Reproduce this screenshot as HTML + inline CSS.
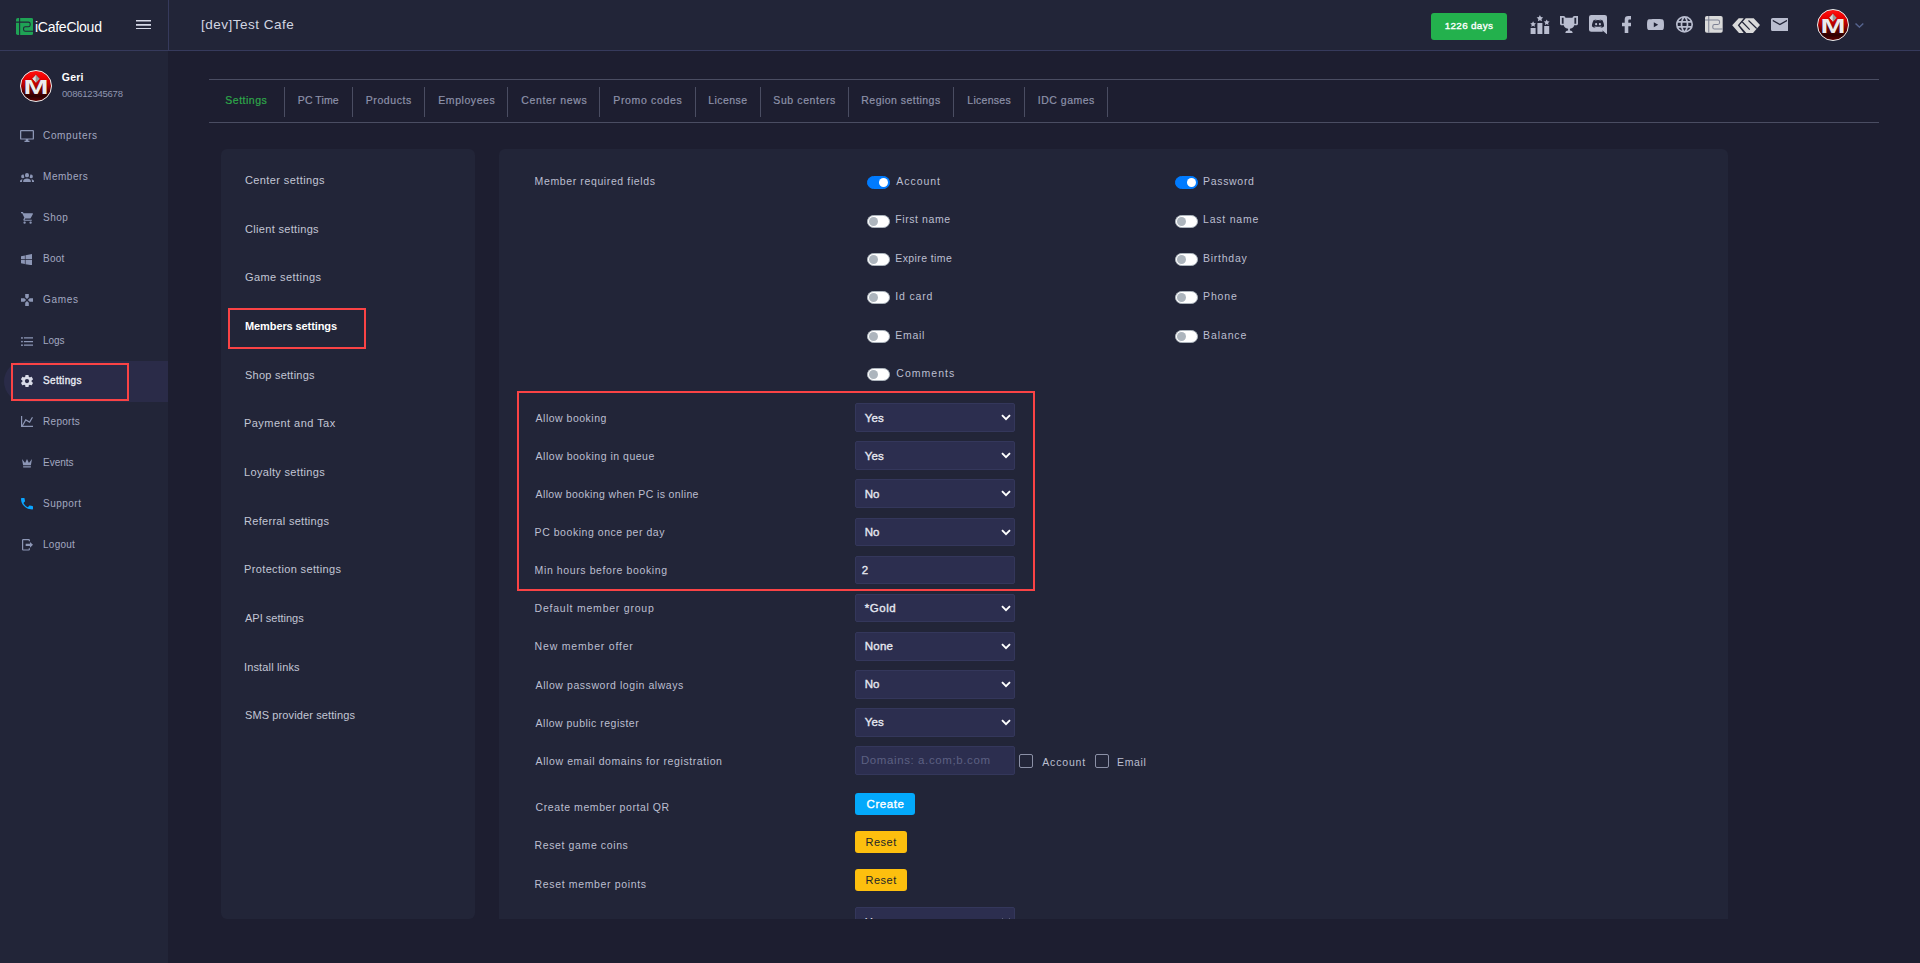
<!DOCTYPE html>
<html lang="en"><head><meta charset="utf-8"><title>iCafeCloud - Members settings</title>
<style>
html,body{margin:0;padding:0}
body{width:1920px;height:963px;overflow:hidden;position:relative;background:#1d1e30;font-family:'Liberation Sans', sans-serif;}
.a{position:absolute;display:block}
.t{position:absolute;display:block;line-height:20px;height:20px;white-space:nowrap}
.panel{position:absolute;background:#222538;border-radius:6px}
.sel{position:absolute;left:855px;width:160px;height:28.6px;background:#2c2e4f;border:1px solid #34375b;border-radius:2px;box-sizing:border-box}
.tg{position:absolute;width:23px;height:13px;border-radius:7px;background:#fff;box-sizing:border-box;border:1px solid #adb5bd}
.tg i{position:absolute;left:1px;top:1px;width:9px;height:9px;border-radius:50%;background:#adb5bd}
.tg.on{background:#007bff;border-color:#007bff}
.tg.on i{left:11px;background:#fff}
.sep{position:absolute;top:87px;width:1px;height:30px;background:#4a4d62}
.cb{position:absolute;width:14px;height:14px;box-sizing:border-box;border:1px solid #8b90a6;border-radius:2px}
.btn{position:absolute;border-radius:3px}
.red{position:absolute;border:2px solid #fa4345;box-sizing:border-box}
</style></head><body>

<nav>
<div class="a" style="left:0;top:0;width:168px;height:963px;background:#222538"></div>
<div class="a" style="left:19.8px;top:69.7px;width:32.4px;height:32.4px;border-radius:50%;box-sizing:border-box;border:1.3px solid #f0f0f0;background:radial-gradient(circle at 50% 45%,rgba(0,0,0,0) 55%,rgba(40,0,0,.55) 100%),linear-gradient(180deg,#ff1212 0%,#f00000 22%,#b80000 48%,#5e0000 70%,#2c0000 84%,#6a0000 100%);overflow:hidden"><span class="t" style="left:0;width:29.799999999999997px;text-align:center;top:5.899999999999999px;font-size:20px;font-weight:700;color:#ececec;transform:scaleX(1.5);text-shadow:0 1px 1px #3a0000">M</span><svg class="a" style="left:0;top:0" width="29.799999999999997" height="29.799999999999997" viewBox="0 0 32 32"><path d="M15.800 3.800l4.200 4.500-4.200 4.700-4.200-4.700z" fill="#dcdcdc" stroke="#c00000" stroke-width="1"/><path d="M15.800 3.800l4.200 4.500-4.200 4.700z" fill="#9a9a9a"/></svg></div>
<div class="a" style="left:4px;top:361px;width:164px;height:41px;background:#2a2b48;border-radius:20.5px 0 0 20.5px"></div>
<div class="red" style="left:11px;top:363px;width:118.400px;height:38px"></div>
<svg class="a" style="left:20px;top:130px;" width="14" height="12" viewBox="1.00 2.00 22.00 20.00" preserveAspectRatio="none"><path fill="#8c96b5" d="M21,16H3V4H21M21,2H3C1.89,2 1,2.89 1,4V16A2,2 0 0,0 3,18H10V20H8V22H16V20H14V18H21A2,2 0 0,0 23,16V4C23,2.89 22.1,2 21,2Z"/></svg>
<svg class="a" style="left:20px;top:173px;" width="14" height="9" viewBox="0.00 5.50 24.00 14.50" preserveAspectRatio="none"><path fill="#8c96b5" d="M12,5.5A3.5,3.5 0 0,1 15.5,9A3.5,3.5 0 0,1 12,12.5A3.5,3.5 0 0,1 8.5,9A3.5,3.5 0 0,1 12,5.5M5,8C5.56,8 6.08,8.15 6.53,8.42C6.38,9.85 6.8,11.27 7.66,12.38C7.16,13.34 6.16,14 5,14A3,3 0 0,1 2,11A3,3 0 0,1 5,8M19,8A3,3 0 0,1 22,11A3,3 0 0,1 19,14C17.84,14 16.84,13.34 16.34,12.38C17.2,11.27 17.62,9.85 17.47,8.42C17.92,8.15 18.44,8 19,8M5.5,18.25C5.5,16.18 8.41,14.5 12,14.5C15.59,14.5 18.5,16.18 18.5,18.25V20H5.5V18.25M0,20V18.5C0,17.11 1.89,15.94 4.45,15.6C3.86,16.28 3.5,17.22 3.5,18.25V20H0M24,20H20.5V18.25C20.5,17.22 20.14,16.28 19.55,15.6C22.11,15.94 24,17.11 24,18.5V20Z"/></svg>
<svg class="a" style="left:20.5px;top:212px;" width="12.0" height="11.800000000000011" viewBox="1.00 2.00 20.00 20.00" preserveAspectRatio="none"><path fill="#8c96b5" d="M17,18C15.89,18 15,18.89 15,20A2,2 0 0,0 17,22A2,2 0 0,0 19,20C19,18.89 18.1,18 17,18M1,2V4H3L6.6,11.59L5.24,14.04C5.09,14.32 5,14.65 5,15A2,2 0 0,0 7,17H19V15H7.42A0.25,0.25 0 0,1 7.17,14.75C7.17,14.7 7.18,14.66 7.2,14.63L8.1,13H15.55C16.3,13 16.96,12.58 17.3,11.97L20.88,5.5C20.95,5.34 21,5.17 21,5A1,1 0 0,0 20,4H5.21L4.27,2M7,18C5.89,18 5,18.89 5,20A2,2 0 0,0 7,22A2,2 0 0,0 9,20C9,18.89 8.1,18 7,18Z"/></svg>
<svg class="a" style="left:21.2px;top:253.5px;" width="11.000000000000004" height="11.300000000000011" viewBox="3.00 3.00 17.00 19.00" preserveAspectRatio="none"><path fill="#8c96b5" d="M3,12V6.75L9,5.43V11.91L3,12M20,3V11.75L10,11.9V5.21L20,3M3,13L9,13.09V19.9L3,18.75V13M20,13.25V22L10,20.09V13.1L20,13.25Z"/></svg>
<svg class="a" style="left:21px;top:294px;" width="12" height="12" viewBox="2.00 2.00 20.00 20.00" preserveAspectRatio="none"><path fill="#8c96b5" d="M16.5,9L13.5,12L16.5,15H22V9M9,16.5V22H15V16.5L12,13.5M7.5,9H2V15H7.5L10.5,12M15,7.5V2H9V7.5L12,10.5L15,7.5Z"/></svg>
<svg class="a" style="left:21px;top:336.5px;" width="12" height="9.100000000000023" viewBox="2.50 4.50 18.50 15.00" preserveAspectRatio="none"><path fill="#8c96b5" d="M7,5H21V7H7V5M7,13V11H21V13H7M4,4.5A1.5,1.5 0 0,1 5.5,6A1.5,1.5 0 0,1 4,7.5A1.5,1.5 0 0,1 2.5,6A1.5,1.5 0 0,1 4,4.5M4,10.5A1.5,1.5 0 0,1 5.5,12A1.5,1.5 0 0,1 4,13.5A1.5,1.5 0 0,1 2.5,12A1.5,1.5 0 0,1 4,10.5M7,19V17H21V19H7M4,16.5A1.5,1.5 0 0,1 5.5,18A1.5,1.5 0 0,1 4,19.5A1.5,1.5 0 0,1 2.5,18A1.5,1.5 0 0,1 4,16.5Z"/></svg>
<svg class="a" style="left:21px;top:374.8px;" width="12" height="12.199999999999989" viewBox="2.27 2.00 19.45 20.00" preserveAspectRatio="none"><path fill="#d9dbe8" d="M12,15.5A3.5,3.5 0 0,1 8.5,12A3.5,3.5 0 0,1 12,8.5A3.5,3.5 0 0,1 15.5,12A3.5,3.5 0 0,1 12,15.5M19.43,12.97C19.47,12.65 19.5,12.33 19.5,12C19.5,11.67 19.47,11.34 19.43,11L21.54,9.37C21.73,9.22 21.78,8.95 21.66,8.73L19.66,5.27C19.54,5.05 19.27,4.96 19.05,5.05L16.56,6.05C16.04,5.66 15.5,5.32 14.87,5.07L14.5,2.42C14.46,2.18 14.25,2 14,2H10C9.75,2 9.54,2.18 9.5,2.42L9.13,5.07C8.5,5.32 7.96,5.66 7.44,6.05L4.95,5.05C4.73,4.96 4.46,5.05 4.34,5.27L2.34,8.73C2.21,8.95 2.27,9.22 2.46,9.37L4.57,11C4.53,11.34 4.5,11.67 4.5,12C4.5,12.33 4.53,12.65 4.57,12.97L2.46,14.63C2.27,14.78 2.21,15.05 2.34,15.27L4.34,18.73C4.46,18.95 4.73,19.03 4.95,18.95L7.44,17.94C7.96,18.34 8.5,18.68 9.13,18.93L9.5,21.58C9.54,21.82 9.75,22 10,22H14C14.25,22 14.46,21.82 14.5,21.58L14.87,18.93C15.5,18.67 16.04,18.34 16.56,17.94L19.05,18.95C19.27,19.03 19.54,18.95 19.66,18.73L21.66,15.27C21.78,15.05 21.73,14.78 21.54,14.63L19.43,12.97Z"/></svg>
<svg class="a" style="left:21px;top:416px;" width="12" height="11" viewBox="2.00 3.00 20.00 18.00" preserveAspectRatio="none"><path fill="#8c96b5" d="M16,11.78L20.24,4.45L21.97,5.45L16.74,14.5L10.23,10.75L5.46,19H22V21H2V3H4V17.54L9.5,8L16,11.78Z"/></svg>
<svg class="a" style="left:22px;top:459px;" width="10" height="8.5" viewBox="3.00 5.00 18.00 15.00" preserveAspectRatio="none"><path fill="#8c96b5" d="M5,16L3,5L8.5,12L12,5L15.5,12L21,5L19,16H5M19,19A1,1 0 0,1 18,20H6A1,1 0 0,1 5,19V18H19V19Z"/></svg>
<svg class="a" style="left:21px;top:498px;" width="12" height="11.5" viewBox="3.00 3.00 18.00 18.00" preserveAspectRatio="none"><path fill="#0aa5ff" d="M6.62,10.79C8.06,13.62 10.38,15.94 13.21,17.38L15.41,15.18C15.69,14.9 16.08,14.82 16.43,14.93C17.55,15.3 18.75,15.5 20,15.5A1,1 0 0,1 21,16.5V20A1,1 0 0,1 20,21A17,17 0 0,1 3,4A1,1 0 0,1 4,3H7.5A1,1 0 0,1 8.5,4C8.5,5.25 8.7,6.45 9.07,7.57C9.18,7.92 9.1,8.31 8.82,8.59L6.62,10.79Z"/></svg>
<svg class="a" style="left:21.5px;top:539.4px;" width="11.0" height="11.600000000000023" viewBox="3.00 2.00 18.00 20.00" preserveAspectRatio="none"><path fill="#8c96b5" d="M16,17V14H9V10H16V7L21,12L16,17M14,2A2,2 0 0,1 16,4V6H14V4H5V20H14V18H16V20A2,2 0 0,1 14,22H5A2,2 0 0,1 3,20V4A2,2 0 0,1 5,2H14Z"/></svg>
<span class="t" style="left:61.80px;top:67px;font-size:10.5px;color:#ffffff;font-weight:700;letter-spacing:0.167px;">Geri</span>
<span class="t" style="left:62.05px;top:84px;font-size:9.5px;color:#8f95b0;letter-spacing:-0.227px;">008612345678</span>
<span class="t" style="left:43.05px;top:126px;font-size:10px;color:#a3a8c0;letter-spacing:0.644px;">Computers</span>
<span class="t" style="left:43.05px;top:167px;font-size:10px;color:#a3a8c0;letter-spacing:0.525px;">Members</span>
<span class="t" style="left:43.05px;top:208px;font-size:10px;color:#a3a8c0;letter-spacing:0.500px;">Shop</span>
<span class="t" style="left:43.05px;top:249px;font-size:10px;color:#a3a8c0;letter-spacing:0.217px;">Boot</span>
<span class="t" style="left:43.05px;top:290px;font-size:10px;color:#a3a8c0;letter-spacing:0.688px;">Games</span>
<span class="t" style="left:43.05px;top:331px;font-size:10px;color:#a3a8c0;letter-spacing:-0.117px;">Logs</span>
<span class="t" style="left:43.05px;top:371px;font-size:10px;color:#e8eaf2;letter-spacing:0.321px;-webkit-text-stroke:0.35px;">Settings</span>
<span class="t" style="left:43.05px;top:412px;font-size:10px;color:#a3a8c0;letter-spacing:0.275px;">Reports</span>
<span class="t" style="left:43.05px;top:453px;font-size:10px;color:#a3a8c0;">Events</span>
<span class="t" style="left:43.05px;top:494px;font-size:10px;color:#a3a8c0;letter-spacing:0.475px;">Support</span>
<span class="t" style="left:43.05px;top:535px;font-size:10px;color:#a3a8c0;letter-spacing:0.250px;">Logout</span>
</nav>
<header>
<div class="a" style="left:0;top:0;width:1920px;height:50px;background:#222538;border-bottom:1px solid #363a5c"></div>
<div class="a" style="left:168px;top:0;width:1px;height:50px;background:#363a5c"></div>
<svg class="a" style="left:16px;top:18px" width="17.2" height="17" viewBox="0 0 17 17" preserveAspectRatio="none"><rect width="17" height="17" rx="1.800" fill="#1fa355"/><path d="M3.600 0V17M0 4.100H12.300Q14 4.100 14 5.800V7Q14 8.700 12.300 8.700H9.200Q7.500 8.700 7.500 10.400V11.600Q7.500 13.300 9.200 13.300H17" fill="none" stroke="#222538" stroke-width="1.05"/></svg>
<span class="t" style="left:35px;top:17px;font-size:15.5px;color:#fff;letter-spacing:-0.3px;transform-origin:0 0;transform:scaleX(0.905)">iCafeCloud</span>
<svg class="a" style="left:136px;top:19.5px;" width="15.199999999999989" height="9.7" viewBox="3.00 6.00 18.00 12.00" preserveAspectRatio="none"><path fill="#d5d8e6" d="M3,6H21V8H3V6M3,11H21V13H3V11M3,16H21V18H3V16Z"/></svg>
<div class="a" style="left:1816.8px;top:8.8px;width:32.4px;height:32.4px;border-radius:50%;box-sizing:border-box;border:1.3px solid #f0f0f0;background:radial-gradient(circle at 50% 45%,rgba(0,0,0,0) 55%,rgba(40,0,0,.55) 100%),linear-gradient(180deg,#ff1212 0%,#f00000 22%,#b80000 48%,#5e0000 70%,#2c0000 84%,#6a0000 100%);overflow:hidden"><span class="t" style="left:0;width:29.799999999999997px;text-align:center;top:5.899999999999999px;font-size:20px;font-weight:700;color:#ececec;transform:scaleX(1.5);text-shadow:0 1px 1px #3a0000">M</span><svg class="a" style="left:0;top:0" width="29.799999999999997" height="29.799999999999997" viewBox="0 0 32 32"><path d="M15.800 3.800l4.200 4.500-4.200 4.700-4.200-4.700z" fill="#dcdcdc" stroke="#c00000" stroke-width="1"/><path d="M15.800 3.800l4.200 4.500-4.200 4.700z" fill="#9a9a9a"/></svg></div>
<svg class="a" style="left:1855px;top:22.8px;" width="8.799999999999955" height="5.099999999999998" viewBox="6.00 8.58 12.00 7.42" preserveAspectRatio="none"><path fill="#56648f" d="M7.41,8.58L12,13.17L16.59,8.58L18,10L12,16L6,10L7.41,8.58Z"/></svg>
<div class="btn" style="left:1431px;top:13px;width:76px;height:27px;background:#23b14d"></div>
<svg class="a" style="left:1530px;top:15px" width="20" height="19" viewBox="0 0 20 19" fill="#b9bdcf"><rect x="0.6" y="13" width="5" height="6"/><rect x="7.4" y="8" width="5" height="11"/><rect x="14.2" y="11" width="5" height="8"/><path d="M3.1 6.2l.9 1.9 2 .3-1.5 1.4.4 2-1.8-1-1.8 1 .4-2L.2 8.4l2-.3zM9.9 0l1 2.1 2.3.3-1.7 1.6.4 2.300-2-1.100-2 1.100.4-2.300L6.600 2.400l2.300-.3zM16.700 4.400l.9 1.900 2 .3-1.500 1.400.4 2-1.800-1-1.800 1 .4-2-1.500-1.400 2-.3z"/></svg>
<svg class="a" style="left:1559.8px;top:16px;" width="18.0" height="17" viewBox="2.00 2.00 20.00 20.00" preserveAspectRatio="none"><path fill="#b9bdcf" d="M20.2,2H19.5H18C17.1,2 16,3 16,4H8C8,3 6.9,2 6,2H4.5H3.8H2V11C2,12 3,13 4,13H6.2C6.6,15 7.9,16.7 11,17V19.1C8.8,19.3 8,20.4 8,21.7V22H16V21.7C16,20.4 15.2,19.3 13,19.1V17C16.1,16.7 17.4,15 17.8,13H20C21,13 22,12 22,11V2H20.2M4,11V4H6V6V11C5.1,11 4.3,11 4,11M20,11C19.7,11 18.9,11 18,11V6V4H20V11Z"/></svg>
<svg class="a" style="left:1589px;top:15px;" width="18" height="19.4" viewBox="2.00 1.00 20.00 23.00" preserveAspectRatio="none"><path fill="#b9bdcf" d="M22,24L16.75,19L17.38,21H4.5A2.5,2.5 0 0,1 2,18.5V3.5A2.5,2.5 0 0,1 4.5,1H19.5A2.5,2.5 0 0,1 22,3.5V24M12,6.8C9.32,6.8 7.44,7.95 7.44,7.95C8.47,7.03 10.27,6.5 10.27,6.5L10.1,6.33C8.41,6.36 6.88,7.53 6.88,7.53C5.16,11.12 5.27,14.22 5.27,14.22C6.67,16.03 8.75,15.9 8.75,15.9L9.46,15C8.21,14.73 7.42,13.62 7.42,13.62C7.42,13.62 9.3,14.9 12,14.9C14.7,14.9 16.58,13.62 16.58,13.62C16.58,13.62 15.79,14.73 14.54,15L15.25,15.9C15.25,15.9 17.33,16.03 18.73,14.22C18.73,14.22 18.84,11.12 17.12,7.53C17.12,7.53 15.59,6.36 13.9,6.33L13.73,6.5C13.73,6.5 15.53,7.03 16.56,7.95C16.56,7.95 14.68,6.8 12,6.8M9.93,10.59C10.58,10.59 11.11,11.16 11.1,11.86C11.1,12.55 10.58,13.13 9.93,13.13C9.29,13.13 8.77,12.55 8.77,11.86C8.77,11.16 9.28,10.59 9.93,10.59M14.1,10.59C14.75,10.59 15.27,11.16 15.27,11.86C15.27,12.55 14.75,13.13 14.1,13.13C13.46,13.13 12.94,12.55 12.94,11.86C12.94,11.16 13.45,10.59 14.1,10.59Z"/></svg>
<svg class="a" style="left:1622px;top:16px;" width="9" height="17" viewBox="7.00 2.00 10.00 20.00" preserveAspectRatio="none"><path fill="#b9bdcf" d="M17,2V2H17V6H15C14.31,6 14,6.81 14,7.5V10H14L17,10V14H14V22H10V14H7V10H10V6A4,4 0 0,1 14,2H17Z"/></svg>
<svg class="a" style="left:1647px;top:18.8px;" width="17" height="11.5" viewBox="2.00 5.00 20.00 14.00" preserveAspectRatio="none"><path fill="#b9bdcf" d="M10,15L15.19,12L10,9V15M21.56,7.17C21.69,7.64 21.78,8.27 21.84,9.07C21.91,9.87 21.94,10.56 21.94,11.16L22,12C22,14.19 21.84,15.8 21.56,16.83C21.31,17.73 20.73,18.31 19.83,18.56C19.36,18.69 18.5,18.78 17.18,18.84C15.88,18.91 14.69,18.94 13.59,18.94L12,19C7.81,19 5.2,18.84 4.17,18.56C3.27,18.31 2.69,17.73 2.44,16.83C2.31,16.36 2.22,15.73 2.16,14.93C2.09,14.13 2.06,13.44 2.06,12.84L2,12C2,9.81 2.16,8.2 2.44,7.17C2.69,6.27 3.27,5.69 4.17,5.44C4.64,5.31 5.5,5.22 6.82,5.16C8.12,5.09 9.31,5.06 10.41,5.06L12,5C16.19,5 18.8,5.16 19.83,5.44C20.73,5.69 21.31,6.27 21.56,7.17Z"/></svg>
<svg class="a" style="left:1676px;top:16px;" width="17" height="16.799999999999997" viewBox="2.00 2.00 20.00 20.00" preserveAspectRatio="none"><path fill="#b9bdcf" d="M16.36,14C16.44,13.34 16.5,12.68 16.5,12C16.5,11.32 16.44,10.66 16.36,10H19.74C19.9,10.64 20,11.31 20,12C20,12.69 19.9,13.36 19.74,14M14.59,19.56C15.19,18.45 15.65,17.25 15.97,16H18.92C17.96,17.65 16.43,18.93 14.59,19.56M14.34,14H9.66C9.56,13.34 9.5,12.68 9.5,12C9.5,11.32 9.56,10.65 9.66,10H14.34C14.43,10.65 14.5,11.32 14.5,12C14.5,12.68 14.43,13.34 14.34,14M12,19.96C11.17,18.76 10.5,17.43 10.09,16H13.91C13.5,17.43 12.83,18.76 12,19.96M8,8H5.08C6.03,6.34 7.57,5.06 9.4,4.44C8.8,5.55 8.35,6.75 8,8M5.08,16H8C8.35,17.25 8.8,18.45 9.4,19.56C7.57,18.93 6.03,17.65 5.08,16M4.26,14C4.1,13.36 4,12.69 4,12C4,11.31 4.1,10.64 4.26,10H7.64C7.56,10.66 7.5,11.32 7.5,12C7.5,12.68 7.56,13.34 7.64,14M12,4.03C12.83,5.23 13.5,6.57 13.91,8H10.09C10.5,6.57 11.17,5.23 12,4.03M18.92,8H15.97C15.65,6.75 15.19,5.55 14.59,4.44C16.43,5.07 17.96,6.34 18.92,8M12,2C6.47,2 2,6.5 2,12A10,10 0 0,0 12,22A10,10 0 0,0 22,12A10,10 0 0,0 12,2Z"/></svg>
<svg class="a" style="left:1705.3px;top:16.3px" width="17.7" height="16.7" viewBox="0 0 17 17" preserveAspectRatio="none"><rect width="17" height="17" rx="1.800" fill="#dadada"/><path d="M3.600 0V17M0 4.100H12.300Q14 4.100 14 5.800V7Q14 8.700 12.300 8.700H9.200Q7.500 8.700 7.500 10.400V11.600Q7.500 13.300 9.200 13.300H17" fill="none" stroke="#7d8193" stroke-width="1.0"/></svg>
<svg class="a" style="left:1732px;top:17px" width="28" height="17" viewBox="0 0 28 17"><path fill="#dadada" d="M0.200 8.200L6.700 1.200H11.700L5.800 8.200L11.700 16H7zM13.700 1.200H21.700L28 8L21 16H14.300L7.500 8.200z"/><path d="M10.300 5L17.700 12.700M16.500 3.500L24.700 11.500" stroke="#222538" stroke-width="1.150" fill="none"/></svg>
<svg class="a" style="left:1770.6px;top:17.9px;" width="17.800000000000182" height="13.100000000000001" viewBox="2.00 4.00 20.00 16.00" preserveAspectRatio="none"><path fill="#b9bdcf" d="M20,8L12,13L4,8V6L12,11L20,6M20,4H4C2.89,4 2,4.89 2,6V18A2,2 0 0,0 4,20H20A2,2 0 0,0 22,18V6C22,4.89 21.1,4 20,4Z"/></svg>
<span class="t" style="left:200.90px;top:15px;font-size:13.5px;color:#d2d5e2;letter-spacing:0.512px;">[dev]Test Cafe</span>
<span class="t" style="left:1444.70px;top:16px;font-size:9.9px;color:#ffffff;letter-spacing:0.325px;-webkit-text-stroke:0.35px;">1226 days</span>
</header>
<main>
<section class="tabs">
<div class="a" style="left:209px;top:79px;width:1670px;height:1px;background:#4a4d62"></div>
<div class="a" style="left:209px;top:122px;width:1670px;height:1px;background:#4a4d62"></div>
<div class="sep" style="left:284px"></div>
<div class="sep" style="left:352px"></div>
<div class="sep" style="left:424px"></div>
<div class="sep" style="left:507px"></div>
<div class="sep" style="left:599px"></div>
<div class="sep" style="left:695px"></div>
<div class="sep" style="left:760px"></div>
<div class="sep" style="left:848px"></div>
<div class="sep" style="left:953px"></div>
<div class="sep" style="left:1024px"></div>
<div class="sep" style="left:1107px"></div>
<span class="t" style="left:225.30px;top:90px;font-size:10.5px;color:#2ea84a;letter-spacing:0.500px;-webkit-text-stroke:0.2px;">Settings</span>
<span class="t" style="left:297.80px;top:90px;font-size:10.5px;color:#8d92aa;letter-spacing:0.083px;-webkit-text-stroke:0.2px;">PC Time</span>
<span class="t" style="left:365.80px;top:90px;font-size:10.5px;color:#8d92aa;letter-spacing:0.571px;-webkit-text-stroke:0.2px;">Products</span>
<span class="t" style="left:438.30px;top:90px;font-size:10.5px;color:#8d92aa;letter-spacing:0.562px;-webkit-text-stroke:0.2px;">Employees</span>
<span class="t" style="left:521.30px;top:90px;font-size:10.5px;color:#8d92aa;letter-spacing:0.650px;-webkit-text-stroke:0.2px;">Center news</span>
<span class="t" style="left:613.30px;top:90px;font-size:10.5px;color:#8d92aa;letter-spacing:0.650px;-webkit-text-stroke:0.2px;">Promo codes</span>
<span class="t" style="left:708.30px;top:90px;font-size:10.5px;color:#8d92aa;letter-spacing:0.417px;-webkit-text-stroke:0.2px;">License</span>
<span class="t" style="left:773.30px;top:90px;font-size:10.5px;color:#8d92aa;letter-spacing:0.600px;-webkit-text-stroke:0.2px;">Sub centers</span>
<span class="t" style="left:861.30px;top:90px;font-size:10.5px;color:#8d92aa;letter-spacing:0.464px;-webkit-text-stroke:0.2px;">Region settings</span>
<span class="t" style="left:967.30px;top:90px;font-size:10.5px;color:#8d92aa;letter-spacing:0.286px;-webkit-text-stroke:0.2px;">Licenses</span>
<span class="t" style="left:1037.80px;top:90px;font-size:10.5px;color:#8d92aa;letter-spacing:0.500px;-webkit-text-stroke:0.2px;">IDC games</span>
</section>
<section class="settings-menu">
<div class="panel" style="left:221px;top:149px;width:254px;height:770px"></div>
<div class="red" style="left:228px;top:308px;width:138px;height:40.500px"></div>
<span class="t" style="left:245.00px;top:170px;font-size:11px;color:#c2c5d5;letter-spacing:0.393px;">Center settings</span>
<span class="t" style="left:245.00px;top:219px;font-size:11px;color:#c2c5d5;letter-spacing:0.321px;">Client settings</span>
<span class="t" style="left:245.00px;top:267px;font-size:11px;color:#c2c5d5;letter-spacing:0.421px;">Game settings</span>
<span class="t" style="left:245.00px;top:316px;font-size:11px;color:#ffffff;font-weight:700;letter-spacing:-0.100px;">Members settings</span>
<span class="t" style="left:245.00px;top:365px;font-size:11px;color:#c2c5d5;letter-spacing:0.242px;">Shop settings</span>
<span class="t" style="left:244.00px;top:413px;font-size:11px;color:#c2c5d5;letter-spacing:0.457px;">Payment and Tax</span>
<span class="t" style="left:244.00px;top:462px;font-size:11px;color:#c2c5d5;letter-spacing:0.327px;">Loyalty settings</span>
<span class="t" style="left:244.00px;top:511px;font-size:11px;color:#c2c5d5;letter-spacing:0.300px;">Referral settings</span>
<span class="t" style="left:244.00px;top:559px;font-size:11px;color:#c2c5d5;letter-spacing:0.364px;">Protection settings</span>
<span class="t" style="left:245.00px;top:608px;font-size:11px;color:#c2c5d5;">API settings</span>
<span class="t" style="left:244.00px;top:657px;font-size:11px;color:#c2c5d5;letter-spacing:0.150px;">Install links</span>
<span class="t" style="left:245.00px;top:705px;font-size:11px;color:#c2c5d5;letter-spacing:0.115px;">SMS provider settings</span>
</section>
<section class="settings-form">
<div class="panel" style="left:499px;top:149px;width:1229px;height:770px;overflow:hidden;border-radius:6px 6px 0 0"><div class="sel" style="left:356px;top:758px"><svg class="a" style="left:145px;top:10px" width="10" height="7" viewBox="0 0 10 7"><path d="M1 1.200l4 4 4-4" fill="none" stroke="#fff" stroke-width="1.900"/></svg><span class="t" style="left:9px;top:4px;font-size:11.5px;color:#e6e8f1">Yes</span></div></div>
<div class="red" style="left:517px;top:391px;width:518px;height:200px"></div>
<div class="tg on" style="left:867px;top:176px"><i></i></div>
<div class="tg on" style="left:1175px;top:176px"><i></i></div>
<div class="tg" style="left:867px;top:214.6px"><i></i></div>
<div class="tg" style="left:1175px;top:214.6px"><i></i></div>
<div class="tg" style="left:867px;top:253px"><i></i></div>
<div class="tg" style="left:1175px;top:253px"><i></i></div>
<div class="tg" style="left:867px;top:291px"><i></i></div>
<div class="tg" style="left:1175px;top:291px"><i></i></div>
<div class="tg" style="left:867px;top:329.7px"><i></i></div>
<div class="tg" style="left:1175px;top:329.7px"><i></i></div>
<div class="tg" style="left:867px;top:368px"><i></i></div>
<div class="sel" style="top:403.10px"><svg class="a" style="left:145px;top:10px" width="10" height="7" viewBox="0 0 10 7"><path d="M1 1.200l4 4 4-4" fill="none" stroke="#fff" stroke-width="1.900"/></svg></div>
<div class="sel" style="top:441.25px"><svg class="a" style="left:145px;top:10px" width="10" height="7" viewBox="0 0 10 7"><path d="M1 1.200l4 4 4-4" fill="none" stroke="#fff" stroke-width="1.900"/></svg></div>
<div class="sel" style="top:479.40px"><svg class="a" style="left:145px;top:10px" width="10" height="7" viewBox="0 0 10 7"><path d="M1 1.200l4 4 4-4" fill="none" stroke="#fff" stroke-width="1.900"/></svg></div>
<div class="sel" style="top:517.55px"><svg class="a" style="left:145px;top:10px" width="10" height="7" viewBox="0 0 10 7"><path d="M1 1.200l4 4 4-4" fill="none" stroke="#fff" stroke-width="1.900"/></svg></div>
<div class="sel" style="top:555.70px"></div>
<div class="sel" style="top:593.85px"><svg class="a" style="left:145px;top:10px" width="10" height="7" viewBox="0 0 10 7"><path d="M1 1.200l4 4 4-4" fill="none" stroke="#fff" stroke-width="1.900"/></svg></div>
<div class="sel" style="top:632.00px"><svg class="a" style="left:145px;top:10px" width="10" height="7" viewBox="0 0 10 7"><path d="M1 1.200l4 4 4-4" fill="none" stroke="#fff" stroke-width="1.900"/></svg></div>
<div class="sel" style="top:670.15px"><svg class="a" style="left:145px;top:10px" width="10" height="7" viewBox="0 0 10 7"><path d="M1 1.200l4 4 4-4" fill="none" stroke="#fff" stroke-width="1.900"/></svg></div>
<div class="sel" style="top:708.30px"><svg class="a" style="left:145px;top:10px" width="10" height="7" viewBox="0 0 10 7"><path d="M1 1.200l4 4 4-4" fill="none" stroke="#fff" stroke-width="1.900"/></svg></div>
<div class="sel" style="top:746.45px"></div>
<div class="cb" style="left:1019px;top:754px"></div><div class="cb" style="left:1095px;top:754px"></div>
<div class="btn" style="left:855px;top:793px;width:60px;height:22px;background:#03a9fb"></div>
<div class="btn" style="left:855px;top:831px;width:52px;height:22px;background:#fdbf0e"></div>
<div class="btn" style="left:855px;top:869px;width:52px;height:22px;background:#fdbf0e"></div>
<span class="t" style="left:534.60px;top:171px;font-size:10.5px;color:#bcbfd0;letter-spacing:0.619px;">Member required fields</span>
<span class="t" style="left:535.60px;top:408px;font-size:10.5px;color:#bcbfd0;letter-spacing:0.500px;">Allow booking</span>
<span class="t" style="left:535.60px;top:446px;font-size:10.5px;color:#bcbfd0;letter-spacing:0.510px;">Allow booking in queue</span>
<span class="t" style="left:535.60px;top:484px;font-size:10.5px;color:#bcbfd0;letter-spacing:0.370px;">Allow booking when PC is online</span>
<span class="t" style="left:534.60px;top:522px;font-size:10.5px;color:#bcbfd0;letter-spacing:0.545px;">PC booking once per day</span>
<span class="t" style="left:534.60px;top:560px;font-size:10.5px;color:#bcbfd0;letter-spacing:0.604px;">Min hours before booking</span>
<span class="t" style="left:534.60px;top:598px;font-size:10.5px;color:#bcbfd0;letter-spacing:0.774px;">Default member group</span>
<span class="t" style="left:534.60px;top:636px;font-size:10.5px;color:#bcbfd0;letter-spacing:0.807px;">New member offer</span>
<span class="t" style="left:535.60px;top:675px;font-size:10.5px;color:#bcbfd0;letter-spacing:0.565px;">Allow password login always</span>
<span class="t" style="left:535.60px;top:713px;font-size:10.5px;color:#bcbfd0;letter-spacing:0.485px;">Allow public register</span>
<span class="t" style="left:535.60px;top:751px;font-size:10.5px;color:#bcbfd0;letter-spacing:0.589px;">Allow email domains for registration</span>
<span class="t" style="left:535.60px;top:797px;font-size:10.5px;color:#bcbfd0;letter-spacing:0.582px;">Create member portal QR</span>
<span class="t" style="left:534.60px;top:835px;font-size:10.5px;color:#bcbfd0;letter-spacing:0.613px;">Reset game coins</span>
<span class="t" style="left:534.60px;top:874px;font-size:10.5px;color:#bcbfd0;letter-spacing:0.650px;">Reset member points</span>
<span class="t" style="left:896.30px;top:171px;font-size:10.5px;color:#bcbfd0;letter-spacing:0.967px;">Account</span>
<span class="t" style="left:895.30px;top:209px;font-size:10.5px;color:#bcbfd0;letter-spacing:0.578px;">First name</span>
<span class="t" style="left:895.30px;top:248px;font-size:10.5px;color:#bcbfd0;letter-spacing:0.400px;">Expire time</span>
<span class="t" style="left:895.30px;top:286px;font-size:10.5px;color:#bcbfd0;letter-spacing:0.833px;">Id card</span>
<span class="t" style="left:895.30px;top:325px;font-size:10.5px;color:#bcbfd0;letter-spacing:0.688px;">Email</span>
<span class="t" style="left:896.30px;top:363px;font-size:10.5px;color:#bcbfd0;letter-spacing:1.029px;">Comments</span>
<span class="t" style="left:1203.05px;top:171px;font-size:10.5px;color:#bcbfd0;letter-spacing:0.679px;">Password</span>
<span class="t" style="left:1203.05px;top:209px;font-size:10.5px;color:#bcbfd0;letter-spacing:0.781px;">Last name</span>
<span class="t" style="left:1203.05px;top:248px;font-size:10.5px;color:#bcbfd0;letter-spacing:0.736px;">Birthday</span>
<span class="t" style="left:1203.05px;top:286px;font-size:10.5px;color:#bcbfd0;letter-spacing:0.837px;">Phone</span>
<span class="t" style="left:1203.05px;top:325px;font-size:10.5px;color:#bcbfd0;letter-spacing:0.892px;">Balance</span>
<span class="t" style="left:864.80px;top:408px;font-size:11.5px;color:#e6e8f1;letter-spacing:0.125px;-webkit-text-stroke:0.35px;">Yes</span>
<span class="t" style="left:864.80px;top:446px;font-size:11.5px;color:#e6e8f1;letter-spacing:0.125px;-webkit-text-stroke:0.35px;">Yes</span>
<span class="t" style="left:864.80px;top:484px;font-size:11.5px;color:#e6e8f1;letter-spacing:-0.100px;-webkit-text-stroke:0.35px;">No</span>
<span class="t" style="left:864.80px;top:522px;font-size:11.5px;color:#e6e8f1;letter-spacing:-0.100px;-webkit-text-stroke:0.35px;">No</span>
<span class="t" style="left:864.80px;top:598px;font-size:11.5px;color:#e6e8f1;letter-spacing:0.525px;-webkit-text-stroke:0.35px;">*Gold</span>
<span class="t" style="left:864.80px;top:636px;font-size:11.5px;color:#e6e8f1;letter-spacing:0.200px;-webkit-text-stroke:0.35px;">None</span>
<span class="t" style="left:864.80px;top:674px;font-size:11.5px;color:#e6e8f1;letter-spacing:-0.100px;-webkit-text-stroke:0.35px;">No</span>
<span class="t" style="left:864.80px;top:712px;font-size:11.5px;color:#e6e8f1;letter-spacing:0.125px;-webkit-text-stroke:0.35px;">Yes</span>
<span class="t" style="left:861.80px;top:560px;font-size:11.5px;color:#e6e8f1;-webkit-text-stroke:0.35px;">2</span>
<span class="t" style="left:860.90px;top:750px;font-size:11.5px;color:#5c6082;letter-spacing:0.605px;">Domains: a.com;b.com</span>
<span class="t" style="left:1042.20px;top:752px;font-size:10.5px;color:#bcbfd0;letter-spacing:0.850px;">Account</span>
<span class="t" style="left:1117.00px;top:752px;font-size:10.5px;color:#bcbfd0;letter-spacing:0.650px;">Email</span>
<span class="t" style="left:866.50px;top:794px;font-size:11.5px;color:#ffffff;letter-spacing:0.580px;-webkit-text-stroke:0.35px;">Create</span>
<span class="t" style="left:865.55px;top:832px;font-size:11px;color:#212529;letter-spacing:0.500px;">Reset</span>
<span class="t" style="left:865.55px;top:870px;font-size:11px;color:#212529;letter-spacing:0.500px;">Reset</span>
</section>
</main>
</body></html>
